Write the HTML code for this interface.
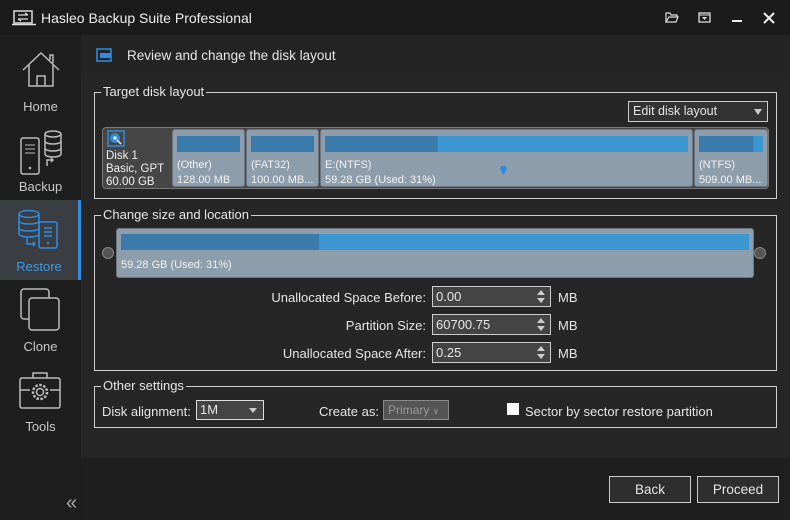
<!DOCTYPE html>
<html><head><style>
*{box-sizing:border-box;margin:0;padding:0}
body{width:790px;height:520px;background:#1f1f1f;font-family:"Liberation Sans",sans-serif;color:#e6e6e6;position:relative;overflow:hidden;font-size:12.5px}
.a{position:absolute}
.side{left:0;top:35px;width:81px;height:485px;background:#1e1e1e}
.nav{position:absolute;left:0;width:81px;height:80px;text-align:center;color:#c8c8c8;font-size:13px}
.nav span{position:absolute;left:0;right:0;bottom:6px}
.grp{position:absolute;border:1px solid #cfcfcf}
.grp .t{position:absolute;top:-9px;left:6px;background:#262626;padding:0 2px;font-size:13px;line-height:16px}
.part{position:absolute;top:1px;height:58px;background:#8d9dab;border-radius:3px;border:1px solid #6b7680;font-size:11px;color:#f2f2f2}
.part .b{position:absolute;left:4px;right:4px;top:6px;height:16px;background:#3a7bab}
.part .l{position:absolute;left:4px;top:28px;line-height:15px;white-space:nowrap}
.inp{position:absolute;left:432px;width:119px;height:21px;background:#444;border:1px solid #ccc;font-size:13px;padding:2px 3px;line-height:16px}
.inp:after{content:"";position:absolute;right:5px;top:3px;border:4px solid transparent;border-bottom:5px solid #ccc;border-top:0}
.inp:before{content:"";position:absolute;right:5px;bottom:3px;border:4px solid transparent;border-top:5px solid #ccc;border-bottom:0}
.lbl{position:absolute;right:364px;font-size:13px}
.mb{position:absolute;left:558px;font-size:13px}
.btn{position:absolute;top:476px;width:82px;height:27px;border:1px solid #ccc;background:#2e2e2e;text-align:center;line-height:25px;font-size:13.5px}
</style></head><body>
<div class="a" style="left:0;top:0;width:790px;height:35px;background:#1b1b1b"></div>
<svg class="a" style="left:12px;top:10px" width="24" height="16"><rect x="2" y="1" width="18" height="12" fill="none" stroke="#ddd" stroke-width="1.5"/><path d="M0 14.5h24" stroke="#ddd" stroke-width="1.5"/><path d="M6 5h10M13 3l3 2M16 9H6M9 11l-3-2" stroke="#ddd" stroke-width="1.3" fill="none"/></svg>
<div class="a" style="left:41px;top:10px;font-size:14px;color:#eee">Hasleo Backup Suite Professional</div>
<svg class="a" style="left:665px;top:12px" width="14" height="11"><path d="M1 10V1h4l1 2h6v2M1 10h10l2-5H4z" fill="none" stroke="#ddd" stroke-width="1.2"/></svg>
<svg class="a" style="left:698px;top:12px" width="14" height="12"><rect x="1" y="1" width="11" height="9" fill="none" stroke="#ddd" stroke-width="1.3"/><path d="M1 3h11" stroke="#ddd"/><path d="M4 5h5l-2.5 3z" fill="#ddd"/></svg>
<div class="a" style="left:732px;top:20px;width:10px;height:2px;background:#eee"></div>
<svg class="a" style="left:763px;top:12px" width="12" height="12"><path d="M1 1l10 10M11 1L1 11" stroke="#eee" stroke-width="2"/></svg>

<div class="a side"></div>
<div class="nav" style="top:40px"><svg width="44" height="44" style="margin-top:8px"><path d="M4 22L22 5l18 17M10 17v21h24V17M18 38V28h8v10M31 12V7h3v8" fill="none" stroke="#bbb" stroke-width="1.5"/></svg><span>Home</span></div>
<div class="nav" style="top:120px"><svg width="44" height="52" style="margin-top:8px"><rect x="2" y="10" width="18" height="36" rx="2" fill="none" stroke="#bbb" stroke-width="1.5"/><path d="M6 17h10M6 21h10M6 25h10" stroke="#bbb"/><circle cx="11" cy="40" r="1.3" fill="#bbb"/><ellipse cx="34" cy="6" rx="8" ry="3" fill="none" stroke="#bbb" stroke-width="1.5"/><path d="M26 6v20c0 4 16 4 16 0V6M26 13c0 4 16 4 16 0M26 20c0 4 16 4 16 0M28 38v-6h6M32 30l2 2-2 2" fill="none" stroke="#bbb" stroke-width="1.5"/></svg><span>Backup</span></div>
<div class="nav" style="top:200px;background:#3a3d42;border-right:3px solid #2e8de0;color:#3d9be5"><svg width="44" height="50" style="margin-top:8px"><ellipse cx="12" cy="6" rx="10" ry="3.5" fill="none" stroke="#2e8de0" stroke-width="1.5"/><path d="M2 6v20c0 4 20 4 20 0V6M2 13c0 4 20 4 20 0M2 20c0 4 20 4 20 0" fill="none" stroke="#2e8de0" stroke-width="1.5"/><rect x="22" y="14" width="18" height="26" rx="2" fill="none" stroke="#2e8de0" stroke-width="1.5"/><path d="M27 20h8M27 24h8M27 28h8M10 30v6h8M16 34l2 2-2 2" fill="none" stroke="#2e8de0" stroke-width="1.5"/><circle cx="31" cy="35" r="1.2" fill="#2e8de0"/></svg><span>Restore</span></div>
<div class="nav" style="top:280px"><svg width="44" height="44" style="margin-top:8px"><rect x="2" y="1" width="28" height="30" rx="3" fill="none" stroke="#bbb" stroke-width="1.5"/><rect x="10" y="10" width="30" height="32" rx="3" fill="#1e1e1e" stroke="#bbb" stroke-width="1.5"/></svg><span>Clone</span></div>
<div class="nav" style="top:360px"><svg width="44" height="44" style="margin-top:8px"><rect x="1" y="10" width="40" height="30" rx="2" fill="none" stroke="#bbb" stroke-width="1.5"/><path d="M14 10V5h14v5M1 22h10M31 22h10" fill="none" stroke="#bbb" stroke-width="1.5"/><circle cx="21" cy="24" r="7" fill="none" stroke="#bbb" stroke-width="2.5" stroke-dasharray="2.5 1.5"/><circle cx="21" cy="24" r="3.5" fill="none" stroke="#bbb" stroke-width="1.5"/></svg><span>Tools</span></div>
<div class="a" style="left:66px;top:492px;color:#aaa;font-size:20px">«</div>

<div class="a" style="left:81px;top:35px;width:709px;height:39px;background:#242424"></div>
<svg class="a" style="left:96px;top:48px" width="16" height="14"><rect x="1" y="1" width="14" height="12" fill="none" stroke="#2e8de0" stroke-width="1.5"/><rect x="4" y="5" width="11" height="5" fill="#2e8de0"/></svg>
<div class="a" style="left:127px;top:48px;font-size:13.5px">Review and change the disk layout</div>
<div class="a" style="left:81px;top:74px;width:709px;height:384px;background:#262626"></div>

<div class="grp" style="left:94px;top:92px;width:683px;height:107px"><div class="t">Target disk layout</div>
 <div class="a" style="left:533px;top:8px;width:140px;height:21px;border:1px solid #ccc;background:#333;font-size:12.5px;padding:2px 4px">Edit disk layout<span style="position:absolute;right:5px;top:7px;border:4px solid transparent;border-top:6px solid #ccc"></span></div>
 <div class="a" style="left:7px;top:34px;width:667px;height:62px;background:#464646;border:1px solid #777;border-radius:4px">
  <svg class="a" style="left:4px;top:2px" width="18" height="17"><rect x="1" y="1" width="16" height="15" fill="none" stroke="#2e8de0" stroke-width="1.5"/><circle cx="8" cy="8" r="5" fill="#2e8de0"/><circle cx="8" cy="8" r="1.6" fill="#fff"/><path d="M10 10l4 4" stroke="#fff" stroke-width="1.5"/></svg>
  <div class="a" style="left:3px;top:22px;font-size:11.5px;line-height:13px;color:#f0f0f0">Disk 1<br>Basic, GPT<br>60.00 GB</div>
  <div class="part" style="left:69px;width:73px"><div class="b"></div><div class="l">(Other)<br>128.00 MB</div></div>
  <div class="part" style="left:143px;width:73px"><div class="b"></div><div class="l">(FAT32)<br>100.00 MB...</div></div>
  <div class="part" style="left:217px;width:373px"><div class="b" style="background:linear-gradient(90deg,#3a7bab 31%,#3c96d2 31%)"></div><div class="l">E:(NTFS)<br>59.28 GB (Used: 31%)</div><svg class="a" style="left:178px;top:34px" width="9" height="12"><path d="M4.5 11L1 5a3.5 3.5 0 117 0z" fill="#2e8de0"/></svg></div>
  <div class="part" style="left:591px;width:74px"><div class="b" style="background:linear-gradient(90deg,#3a7bab 85%,#3c96d2 85%)"></div><div class="l">(NTFS)<br>509.00 MB...</div></div>
 </div>
</div>

<div class="grp" style="left:94px;top:215px;width:683px;height:156px"><div class="t">Change size and location</div></div>
<div class="a" style="left:116px;top:228px;width:638px;height:50px;background:#8d9dab;border:1px solid #6b7680;border-radius:3px">
 <div class="a" style="left:4px;right:4px;top:5px;height:16px;background:linear-gradient(90deg,#3a7bab 31.5%,#3c96d2 31.5%)"></div>
 <div class="a" style="left:4px;top:30px;font-size:11px;color:#f2f2f2">59.28 GB (Used: 31%)</div>
</div>
<div class="a" style="left:102px;top:247px;width:12px;height:12px;border-radius:50%;background:#555;border:1px solid #888"></div>
<div class="a" style="left:754px;top:247px;width:12px;height:12px;border-radius:50%;background:#555;border:1px solid #888"></div>
<div class="lbl" style="top:290px">Unallocated Space Before:</div>
<div class="lbl" style="top:318px">Partition Size:</div>
<div class="lbl" style="top:346px">Unallocated Space After:</div>
<div class="inp" style="top:286px">0.00</div>
<div class="inp" style="top:314px">60700.75</div>
<div class="inp" style="top:342px">0.25</div>
<div class="mb" style="top:290px">MB</div><div class="mb" style="top:318px">MB</div><div class="mb" style="top:346px">MB</div>

<div class="grp" style="left:94px;top:386px;width:683px;height:42px"><div class="t">Other settings</div></div>
<div class="a" style="left:102px;top:404px;font-size:13px">Disk alignment:</div>
<div class="a" style="left:196px;top:400px;width:68px;height:20px;border:1px solid #ddd;background:#444;font-size:13px;padding:1px 3px">1M<span style="position:absolute;right:6px;top:7px;border:4px solid transparent;border-top:5px solid #ccc"></span></div>
<div class="a" style="left:319px;top:404px;font-size:13px">Create as:</div>
<div class="a" style="left:383px;top:400px;width:66px;height:20px;border:1px solid #888;background:#555;color:#999;font-size:12px;padding:2px 4px">Primary <span style="font-size:9px">∨</span></div>
<div class="a" style="left:507px;top:403px;width:12px;height:12px;background:#fff"></div>
<div class="a" style="left:525px;top:404px;font-size:13px">Sector by sector restore partition</div>

<div class="btn" style="left:609px">Back</div>
<div class="btn" style="left:697px">Proceed</div>
</body></html>
